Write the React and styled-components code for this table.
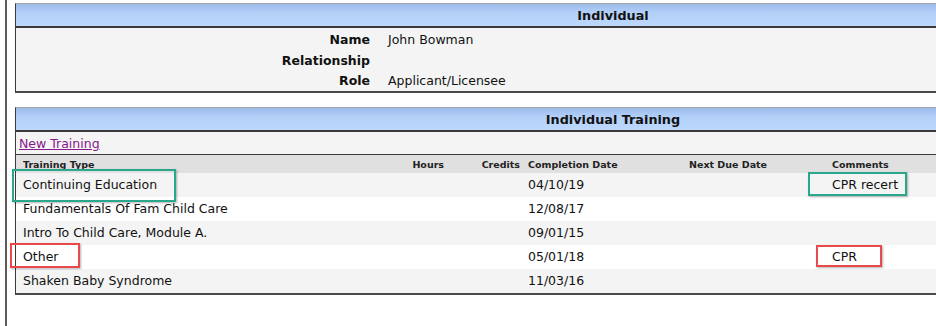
import React from 'react'
import styled, { createGlobalStyle } from 'styled-components'

const GlobalStyle = createGlobalStyle`
    html, body {
        margin: 0;
        padding: 0;
        background: #fff;
        overflow: hidden;
    }
    body {
        font-family: "DejaVu Sans", Verdana, sans-serif;
        font-size: 12.5px;
        color: #111;
    }
`;

const training = [
    { type: 'Continuing Education', hours: '', credits: '', completed: '04/10/19', due: '', comments: 'CPR recert' },
    { type: 'Fundamentals Of Fam Child Care', hours: '', credits: '', completed: '12/08/17', due: '', comments: '' },
    { type: 'Intro To Child Care, Module A.', hours: '', credits: '', completed: '09/01/15', due: '', comments: '' },
    { type: 'Other', hours: '', credits: '', completed: '05/01/18', due: '', comments: 'CPR' },
    { type: 'Shaken Baby Syndrome', hours: '', credits: '', completed: '11/03/16', due: '', comments: '' },
];

const marks = [
    { left: 12, top: 169, width: 164, height: 33, tone: 'green' },
    { left: 808, top: 172, width: 99, height: 24, tone: 'green' },
    { left: 10, top: 243, width: 70, height: 25, tone: 'red' },
    { left: 816, top: 245, width: 66, height: 22, tone: 'red' },
];

function App() {
    return (
        <>
            <GlobalStyle />
            <Page>
                <Frame>
                    <Panel>
                        <PanelHeader>Individual</PanelHeader>
                        <InfoBody>
                            <Label>Name</Label><Value>John Bowman</Value>
                            <Label>Relationship</Label><Value></Value>
                            <Label>Role</Label><Value>Applicant/Licensee</Value>
                        </InfoBody>
                    </Panel>

                    <Panel $gap>
                        <PanelHeader>Individual Training</PanelHeader>
                        <ActionBar>
                            <NewLink href="#">New Training</NewLink>
                        </ActionBar>
                        <HeadRow>
                            <HeadCell>Training Type</HeadCell>
                            <HeadCell $right>Hours</HeadCell>
                            <HeadCell $right>Credits</HeadCell>
                            <HeadCell>Completion Date</HeadCell>
                            <HeadCell>Next Due Date</HeadCell>
                            <HeadCell>Comments</HeadCell>
                        </HeadRow>
                        {training.map((t, i) => (
                            <DataRow key={t.type} $alt={i % 2 === 0}>
                                <Cell $first>{t.type}</Cell>
                                <Cell $right>{t.hours}</Cell>
                                <Cell $right>{t.credits}</Cell>
                                <Cell>{t.completed}</Cell>
                                <Cell>{t.due}</Cell>
                                <Cell>{t.comments}</Cell>
                            </DataRow>
                        ))}
                    </Panel>
                </Frame>

                {marks.map((m, i) => (
                    <Mark key={i} $tone={m.tone}
                        style={{ left: m.left, top: m.top, width: m.width, height: m.height }} />
                ))}
            </Page>
        </>
    )
}

const Page = styled.div`
    position: relative;
    width: 936px;
    height: 326px;
    overflow: hidden;
`;

const Frame = styled.div`
    margin-left: 5px;
    height: 326px;
    box-sizing: border-box;
    border-left: 2px solid #5c5c5c;
    padding: 3px 0 0 8px;
    display: flex;
    flex-direction: column;
`;

const Panel = styled.div`
    width: 1194px;
    border-left: 1px solid #3a3a3a;
    border-bottom: 2px solid #4a4a4a;
    border-top: 1px solid #a6a6a6;
    background: #f4f4f4;
    margin-top: ${p => p.$gap ? '14px' : '0'};
`;

const PanelHeader = styled.div`
    height: 22px;
    line-height: 23px;
    text-align: center;
    font-weight: bold;
    font-size: 12.8px;
    color: #111;
    background: linear-gradient(#9bbbec, #b3d0f8 40%, #bcd8fc);
    border-bottom: 2px solid #3a3a3a;
`;

const InfoBody = styled.div`
    display: grid;
    grid-template-columns: 354px 1fr;
    column-gap: 18px;
    padding: 2px 0 0;
    height: 63px;
    box-sizing: border-box;
`;

const Label = styled.div`
    text-align: right;
    font-weight: bold;
    line-height: 20.5px;
`;

const Value = styled.div`
    line-height: 20.5px;
`;

const ActionBar = styled.div`
    height: 22px;
    line-height: 23px;
    padding-left: 3px;
    border-bottom: 1px solid #3a3a3a;
    background: #f4f4f4;
`;

const NewLink = styled.a`
    color: #86188a;
    text-decoration: underline;
`;

const cols = '374px 58px 76px 161px 143px 1fr';

const HeadRow = styled.div`
    display: grid;
    grid-template-columns: ${cols};
    height: 18px;
    background: #e0e0e0;
`;

const HeadCell = styled.div`
    font-size: 9.5px;
    font-weight: bold;
    line-height: 19px;
    color: #222;
    padding: ${p => p.$right ? '0 4px 0 0' : '0 0 0 4px'};
    text-align: ${p => p.$right ? 'right' : 'left'};
    white-space: nowrap;
    &:first-child {
        padding-left: 7px;
    }
`;

const DataRow = styled.div`
    display: grid;
    grid-template-columns: ${cols};
    height: 24px;
    background: ${p => p.$alt ? '#f4f4f4' : '#fff'};
`;

const Cell = styled.div`
    line-height: 24px;
    white-space: nowrap;
    padding: ${p => p.$first ? '0 0 0 7px' : p.$right ? '0 4px 0 0' : '0 0 0 4px'};
    text-align: ${p => p.$right ? 'right' : 'left'};
`;

const Mark = styled.div`
    position: absolute;
    box-sizing: border-box;
    border: 2px solid ${p => p.$tone === 'green' ? '#29a68b' : '#e9494b'};
    box-shadow: 1px 1px 2px rgba(0, 0, 0, 0.3);
`;

export default App
